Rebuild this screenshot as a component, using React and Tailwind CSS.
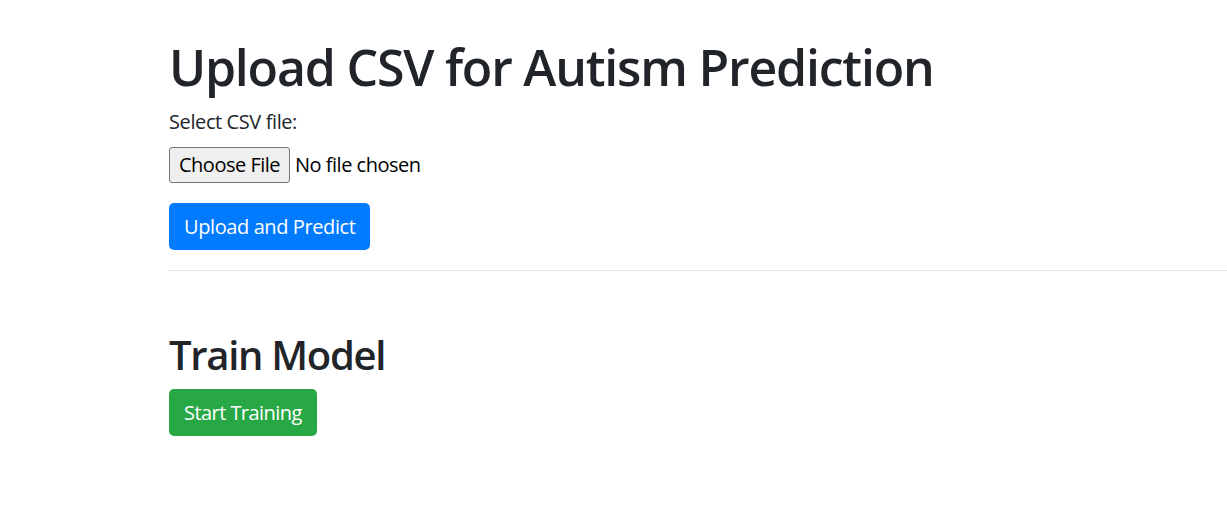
export default function App() {
  return (
    <div className="min-h-[507px] bg-white pl-[169px] pt-[37px] text-[#212529] font-['Open_Sans',sans-serif]">
      <h1 className="mb-[10px] text-[50px] leading-[60px] font-semibold tracking-[-1.2px]">Upload CSV for Autism Prediction</h1>
      <form onSubmit={(e) => e.preventDefault()}>
        <div className="mb-[20px]">
          <label className="mb-[10px] block text-[20px] leading-[30px] tracking-[-0.4px]">Select CSV file:</label>
          <div className="flex items-center h-[36px]">
            <button
              type="button"
              className="h-[36px] rounded-[3px] border border-[#767676] bg-[#efefef] px-[9px] text-[20px] leading-none text-black tracking-[-0.5px]"
            >
              Choose File
            </button>
            <span className="ml-[5px] text-[20px] text-black tracking-[-0.5px]">No file chosen</span>
          </div>
        </div>
        <button
          type="submit"
          className="h-[47px] rounded-[5px] bg-[#007bff] px-[15px] text-[20px] leading-[30px] text-white tracking-[-0.4px]"
        >
          Upload and Predict
        </button>
      </form>
      <hr className="mt-[20px] border-t border-[rgba(0,0,0,0.1)]" />
      <h2 className="mt-[60px] mb-[10px] text-[40px] leading-[48px] font-semibold tracking-[-1.3px]">Train Model</h2>
      <button
        type="button"
        className="h-[47px] rounded-[5px] bg-[#28a745] px-[15px] text-[20px] leading-[30px] text-white tracking-[-0.55px]"
      >
        Start Training
      </button>
    </div>
  );
}
